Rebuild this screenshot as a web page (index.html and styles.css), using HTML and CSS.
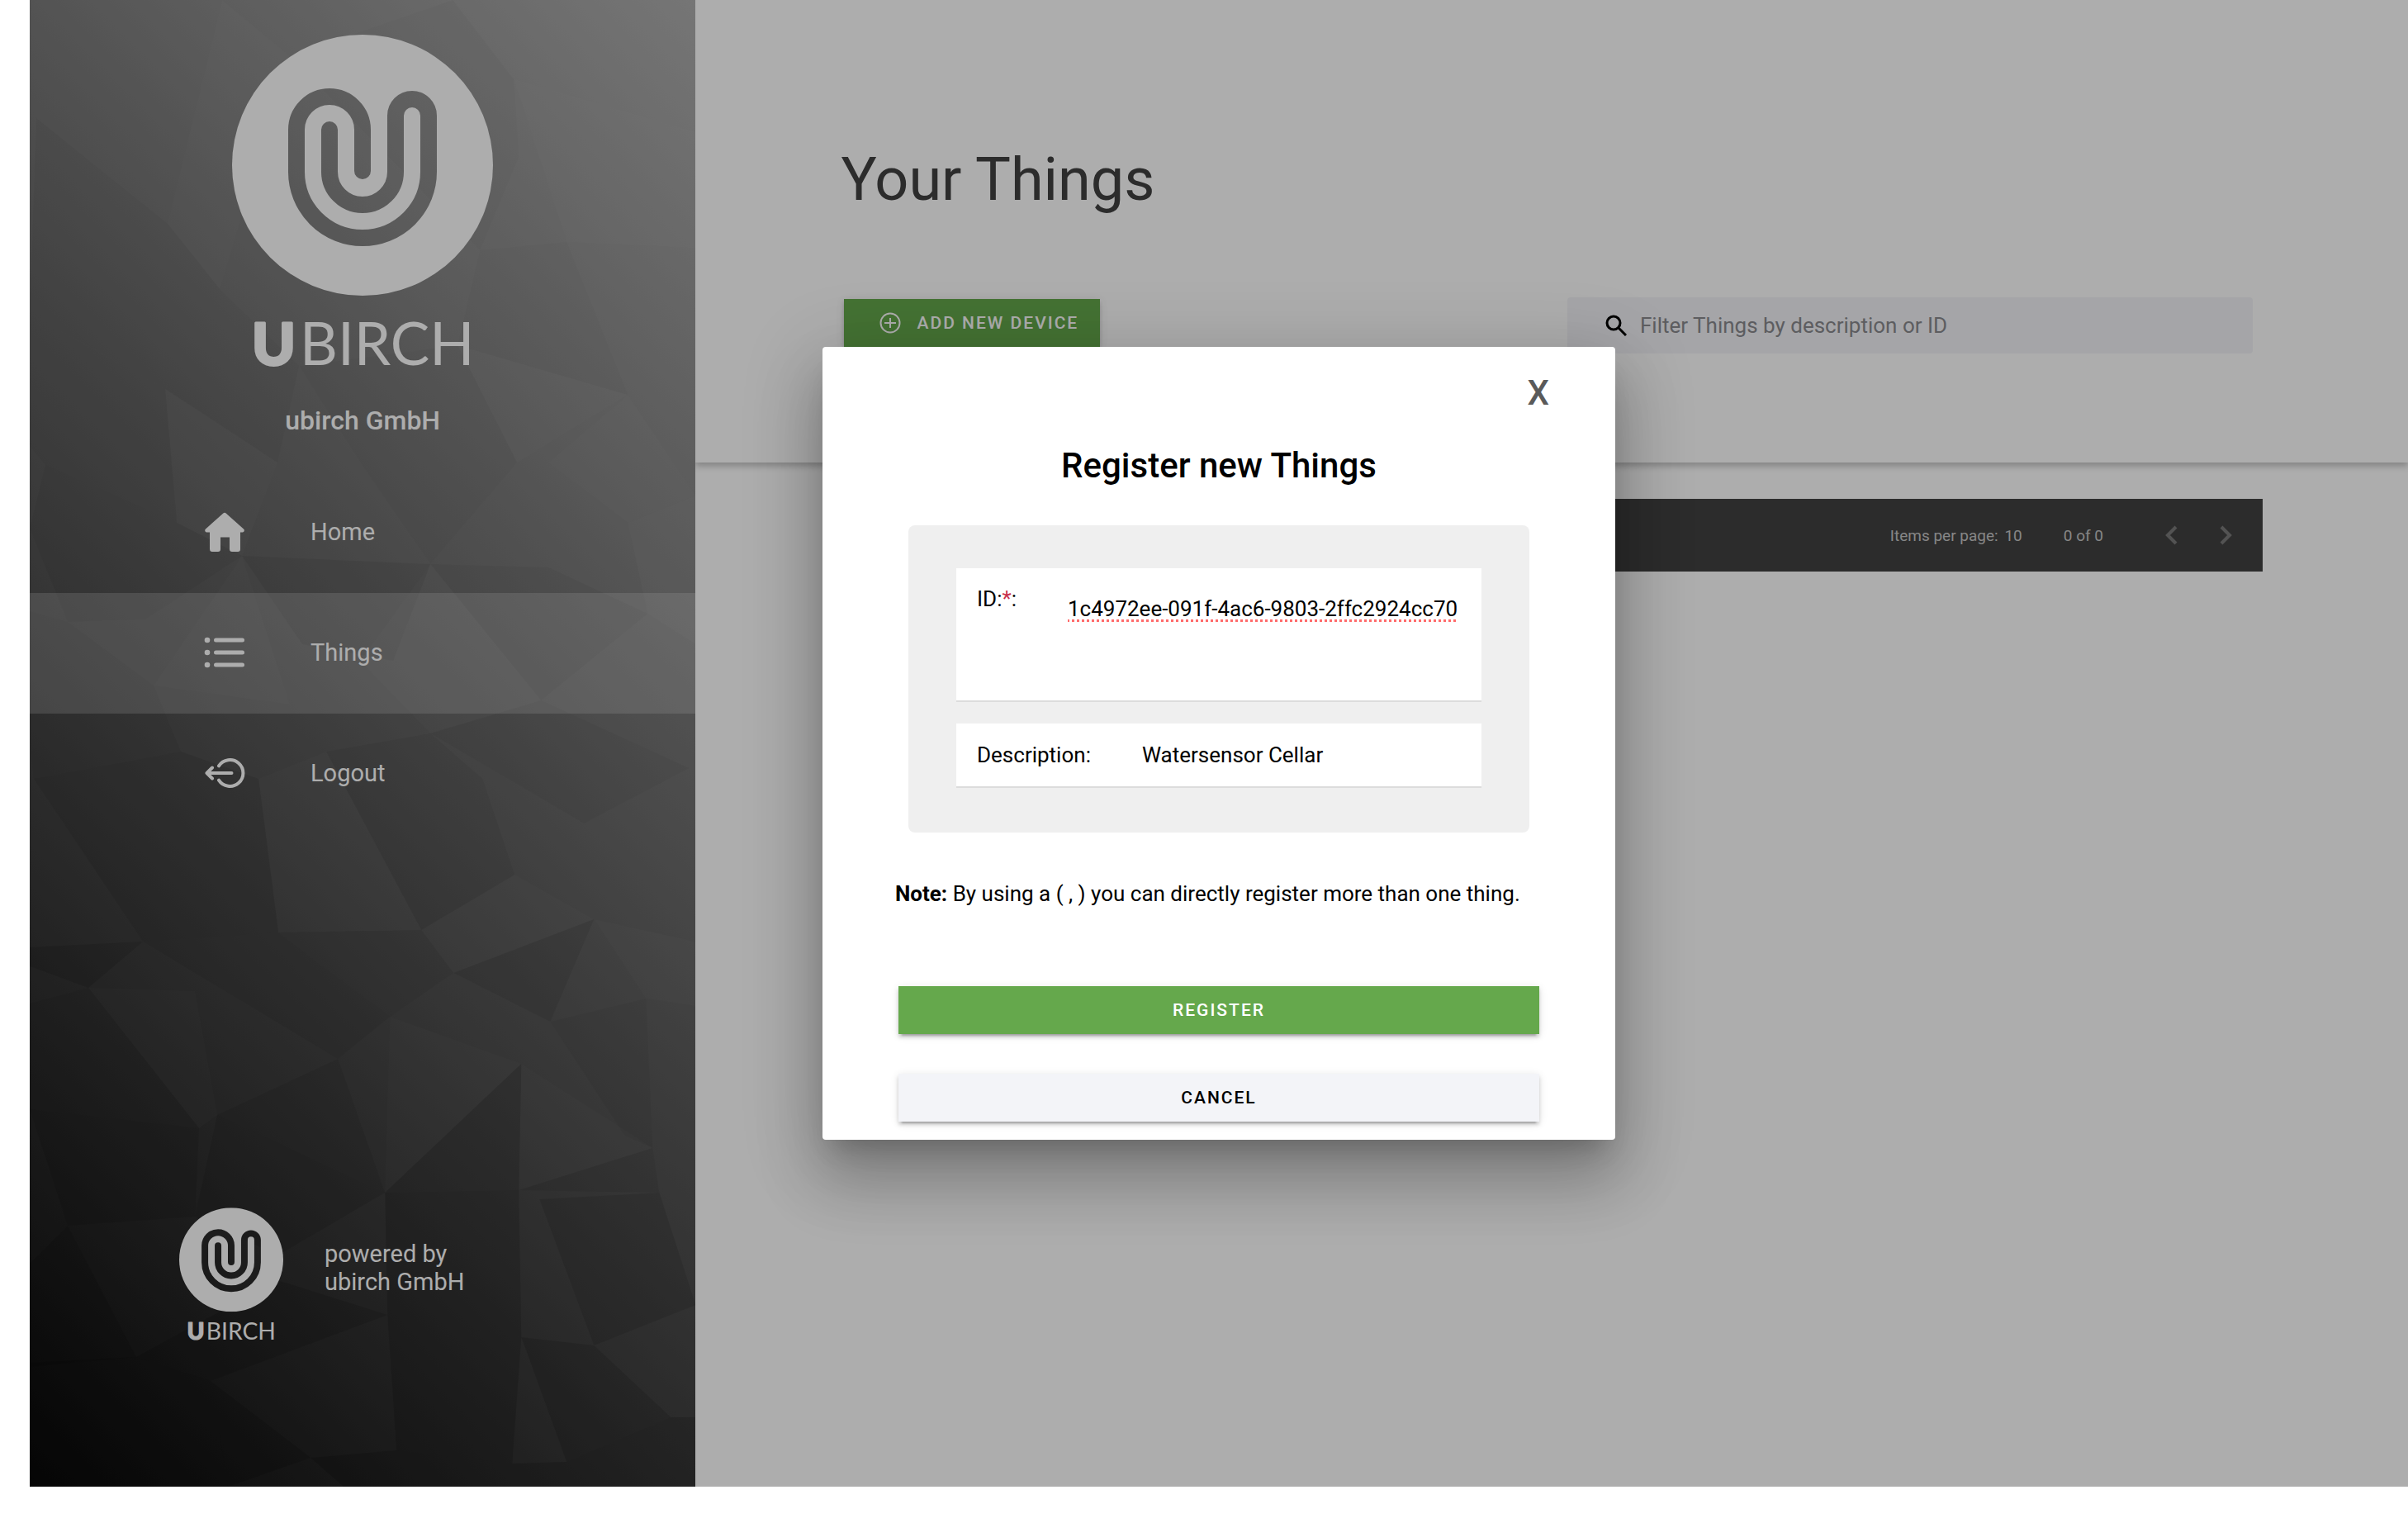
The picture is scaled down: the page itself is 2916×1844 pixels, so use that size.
FILE: index.html
```html
<!DOCTYPE html>
<html lang="en">
<head>
<meta charset="utf-8">
<title>Your Things</title>
<link rel="stylesheet" href="styles.css">
</head>
<body>
<div class="app">
  <aside class="sidebar">
    <svg class="sidebar-art" viewBox="0 0 806 1800" preserveAspectRatio="none" aria-hidden="true">
      <defs>
        <linearGradient id="shade" gradientUnits="userSpaceOnUse" x1="0" y1="1800" x2="1303" y2="497">
          <stop offset="0" stop-color="#0a0a0a"/>
          <stop offset="1" stop-color="#aeaeae"/>
        </linearGradient>
      </defs>
      <rect width="806" height="1800" fill="url(#shade)"/>
      <g fill="#000">
        <path opacity=".03" d="M8 143 167 271 230 350 164 471 0 380Z"/>
        <path opacity=".03" d="M0 380 164 471 178 633 19 563 0 540Z"/>
        <path opacity=".03" d="M230 350 326 443 300 560 164 471Z"/>
        <path opacity=".02" d="M512 0 586 96 592 190 545 303 315 68Z"/>
        <path opacity=".02" d="M545 303 650 293 724 478 518 418Z"/>
        <path opacity=".02" d="M326 443 518 418 590 560 485 683 400 560Z"/>
        <path opacity=".04" d="M19 563 178 633 257 673 140 750 46 753 0 640Z"/>
        <path opacity=".06" d="M257 673 485 683 440 800 330 780Z"/>
        <path opacity=".04" d="M485 683 628 687 748 743 619 848Z"/>
        <path opacity=".03" d="M0 740 46 753 150 830 183 910 5 943 0 900Z"/>
        <path opacity=".07" d="M5 943 183 910 277 943 301 1129 137 1140Z"/>
        <path opacity=".05" d="M359 910 485 888 548 943 587 1059 474 1126Z"/>
        <path opacity=".03" d="M619 848 798 930 671 997 485 888Z"/>
        <path opacity=".1" d="M0 1147 137 1140 71 1196 0 1170Z"/>
        <path opacity=".06" d="M137 1140 301 1129 436 1231 373 1282Z"/>
        <path opacity=".04" d="M301 1129 474 1126 513 1178 436 1231Z"/>
        <path opacity=".07" d="M513 1178 683 1113 630 1237Z"/>
        <path opacity=".05" d="M0 1215 71 1196 205 1366 0 1343Z"/>
        <path opacity=".07" d="M227 1350 373 1282 430 1444Z"/>
        <path opacity=".1" d="M595 1288 592 1441 430 1444Z"/>
        <path opacity=".09" d="M0 1343 205 1366 200 1473 46 1484Z"/>
        <path opacity=".09" d="M227 1350 430 1444 300 1520 200 1473Z"/>
        <path opacity=".14" d="M430 1444 592 1441 595 1619 433 1592Z"/>
        <path opacity=".1" d="M617 1452 762 1444 806 1580 683 1629Z"/>
        <path opacity=".1" d="M46 1484 129 1643 0 1655 0 1530Z"/>
        <path opacity=".14" d="M129 1643 219 1672 240 1800 0 1800 0 1650Z"/>
        <path opacity=".14" d="M219 1672 340 1765 240 1800Z"/>
        <path opacity=".12" d="M300 1550 433 1592 219 1672 129 1643Z"/>
        <path opacity=".14" d="M433 1592 595 1619 584 1772 444 1756Z"/>
        <path opacity=".12" d="M595 1619 683 1629 776 1716 650 1770Z"/>
        <path opacity=".15" d="M340 1765 444 1756 584 1772 650 1770 776 1716 806 1716 806 1800 380 1800Z"/>
        <path opacity=".04" d="M630 1237 746 1209 754 1390 720 1375Z"/>
        <path opacity=".06" d="M592 1441 754 1390 762 1444Z"/>
      </g>
      <g fill="#fff">
        <path opacity=".02" d="M233 0 315 68 230 350 167 271Z"/>
        <path opacity=".02" d="M586 96 806 160 806 300 650 293Z"/>
        <path opacity=".02" d="M518 418 724 478 590 560Z"/>
        <path opacity=".02" d="M724 478 806 600 724 633 628 560Z"/>
        <path opacity=".02" d="M178 633 164 471 300 560 257 673Z"/>
        <path opacity=".03" d="M724 633 806 600 806 780 748 743Z"/>
        <path opacity=".02" d="M150 830 257 673 315 853Z"/>
        <path opacity=".02" d="M485 683 619 848 485 888 400 800Z"/>
        <path opacity=".02" d="M277 943 359 910 474 1126 301 1129Z"/>
        <path opacity=".02" d="M587 1059 683 1113 513 1178 474 1126Z"/>
        <path opacity=".02" d="M683 1113 806 1140 806 1218 746 1209Z"/>
        <path opacity=".02" d="M436 1231 595 1288 430 1444Z"/>
        <path opacity=".02" d="M71 1196 200 1200 227 1350 205 1366Z"/>
        <path opacity=".02" d="M595 1288 754 1390 592 1441Z"/>
      </g>
    </svg>

    <svg class="brand" viewBox="0 0 316 420" role="img" aria-label="ubirch">
      <defs>
        <mask id="loop">
          <rect width="316" height="316" fill="#fff"/>
          <path d="M158 165V115A40 40 0 0 0 78 115V166A80 80 0 0 0 238 166V98A20 20 0 0 0 198 98V166A40 40 0 0 1 118 166V115" fill="none" stroke="#000" stroke-width="20" stroke-linecap="round"/>
        </mask>
      </defs>
      <circle cx="158" cy="158" r="158" fill="#fff" mask="url(#loop)"/>
      <text class="wordmark" x="24" y="400"><tspan class="wordmark-u">U</tspan><tspan x="82">BIRCH</tspan></text>
    </svg>
    <p class="tenant">ubirch GmbH</p>

    <nav class="menu">
      <a class="menu-item" href="#home">
        <svg class="menu-icon" viewBox="0 0 48 48" aria-hidden="true"><path fill="currentColor" d="M22 1.700a3 3 0 0 1 4 0L47 20.500c2 2 0 4.500-3 4H43V45a3 3 0 0 1-3 3H33a3 3 0 0 1-3-3V30.500H19V45a3 3 0 0 1-3 3H9a3 3 0 0 1-3-3V24.500H4c-3 .5-5-2-3-4Z"/></svg>
        <span>Home</span>
      </a>
      <a class="menu-item menu-item-active" href="#things">
        <svg class="menu-icon" viewBox="0 0 48 48" aria-hidden="true"><g fill="currentColor"><circle cx="3" cy="9" r="3.300"/><circle cx="3" cy="24" r="3.300"/><circle cx="3" cy="39" r="3.300"/><rect x="11" y="6.500" width="37" height="5" rx="2.500"/><rect x="11" y="21.500" width="37" height="5" rx="2.500"/><rect x="11" y="36.500" width="37" height="5" rx="2.500"/></g></svg>
        <span>Things</span>
      </a>
      <a class="menu-item" href="#logout">
        <svg class="menu-icon" viewBox="0 0 48 48" aria-hidden="true"><path fill="none" stroke="currentColor" stroke-width="4" stroke-linecap="round" stroke-linejoin="round" d="M17 15.300A16 16 0 1 1 17 32.700M32.500 24H3M9 17.500 2.500 24 9 30.500"/></svg>
        <span>Logout</span>
      </a>
    </nav>

    <div class="powered">
      <svg class="powered-logo" viewBox="0 0 316 420" aria-hidden="true">
        <circle cx="158" cy="158" r="158" fill="#fff" mask="url(#loop)"/>
        <text class="wordmark" x="24" y="400"><tspan class="wordmark-u">U</tspan><tspan x="82">BIRCH</tspan></text>
      </svg>
      <p class="powered-text">powered by<br>ubirch GmbH</p>
    </div>
  </aside>

  <main class="content">
    <header class="page-head">
      <h1 class="page-title">Your Things</h1>
      <div class="toolbar">
        <button class="btn btn-primary btn-add" type="button">
          <svg class="add-icon" viewBox="0 0 26 26" aria-hidden="true"><path fill="none" stroke="currentColor" stroke-width="2" d="M13 1.500a11.500 11.500 0 1 0 0 23a11.500 11.500 0 0 0 0-23ZM13 7V19M6 13H20"/></svg>
          Add new device
        </button>
        <label class="search">
          <svg class="search-icon" viewBox="0 0 26 26" aria-hidden="true"><path fill="none" stroke="#000" stroke-width="3" d="M10 2a8 8 0 1 0 0 16a8 8 0 0 0 0-16ZM16 16 25 25"/></svg>
          <input class="search-input" type="text" placeholder="Filter Things by description or ID" aria-label="Filter Things by description or ID">
        </label>
      </div>
    </header>
    <div class="paginator">
      <span class="page-size">Items per page: <span class="page-count">10</span></span>
      <span class="page-range">0 of 0</span>
      <button class="page-btn" type="button" aria-label="Previous page"><svg class="page-icon" viewBox="0 0 24 24" aria-hidden="true"><path fill="none" stroke="currentColor" stroke-width="4" d="M17 2 7 12 17 22"/></svg></button>
      <button class="page-btn" type="button" aria-label="Next page"><svg class="page-icon" viewBox="0 0 24 24" aria-hidden="true"><path fill="none" stroke="currentColor" stroke-width="4" d="M7 2 17 12 7 22"/></svg></button>
    </div>
  </main>

  <div class="overlay">
    <form class="dialog" role="dialog" aria-labelledby="dialog-title">
      <button class="close" type="button" aria-label="Close">X</button>
      <h2 class="dialog-title" id="dialog-title">Register new Things</h2>
      <div class="panel">
        <div class="field field-id">
          <label class="field-label" for="ids">ID:<span class="required">*</span>:</label>
          <textarea class="field-input ids" id="ids" spellcheck="false">1c4972ee-091f-4ac6-9803-2ffc2924cc70</textarea>
        </div>
        <div class="field">
          <label class="field-label" for="description">Description:</label>
          <input class="field-input description" id="description" type="text" value="Watersensor Cellar">
        </div>
      </div>
      <p class="note"><b>Note:</b> By using a ( , ) you can directly register more than one thing.</p>
      <button class="btn btn-primary btn-wide" type="button">Register</button>
      <button class="btn btn-plain btn-wide" type="button">Cancel</button>
    </form>
  </div>
</div>
</body>
</html>
```
FILE: styles.css
```css
* { box-sizing: border-box; }

body {
  margin: 0;
  background: #fff;
  color: #000;
  font-family: Roboto, "Liberation Sans", sans-serif;
  font-size: 26px;
}

h1, h2, p { margin: 0; }

button, input, textarea {
  border: 0;
  padding: 0;
  margin: 0;
  font: inherit;
  color: inherit;
  background: none;
}

.app {
  position: relative;
  display: grid;
  grid-template-columns: 28% 1fr;
  min-height: calc(100vh - 44px);
  margin: 0 0 44px 36px;
}

/* Sidebar */
.sidebar {
  position: relative;
  isolation: isolate;
  display: flex;
  flex-direction: column;
  padding: 42px 0 170px;
  color: #fff;
}

.sidebar-art {
  position: absolute;
  inset: 0;
  z-index: -1;
  width: 100%;
  height: 100%;
}

.brand {
  align-self: center;
  width: 316px;
  height: 420px;
}

.wordmark {
  font-family: Lato, sans-serif;
  font-size: 71px;
  fill: #fff;
}

.wordmark-u {
  font-weight: 900;
  stroke: #fff;
  stroke-width: 3px;
  stroke-linejoin: round;
}

.tenant {
  margin: 28px 0 44px;
  font-size: 32px;
  line-height: 38px;
  font-weight: 500;
  text-align: center;
}

.menu-item {
  display: flex;
  align-items: center;
  gap: 80px;
  height: 146px;
  padding: 0 0 2px 212px;
  font-size: 29px;
  color: inherit;
  text-decoration: none;
}

.menu-item-active { background: rgba(255, 255, 255, .2); }

.menu-icon { width: 48px; height: 48px; overflow: visible; }

.powered {
  display: flex;
  align-items: flex-start;
  gap: 50px;
  margin-top: auto;
  padding-left: 181px;
}

.powered-logo { width: 126px; height: 168px; }

.powered-text {
  padding-top: 39px;
  font-size: 29px;
  line-height: 34px;
}

/* Content */
.content { background: #fff; }

.page-head {
  padding: 176px 176px 132px;
  box-shadow: 0 4px 8px rgba(0, 0, 0, .25);
}

.page-title {
  margin-bottom: 100px;
  font-size: 72px;
  line-height: 84px;
  font-weight: 400;
  color: #424242;
}

.toolbar {
  display: flex;
  align-items: flex-start;
  justify-content: space-between;
  padding: 0 12px 0 4px;
}

.btn {
  display: flex;
  align-items: center;
  justify-content: center;
  height: 58px;
  font-size: 21px;
  font-weight: 500;
  letter-spacing: 2px;
  text-transform: uppercase;
  box-shadow: 0 6px 2px -4px rgba(0, 0, 0, .2), 0 4px 4px rgba(0, 0, 0, .14), 0 2px 10px rgba(0, 0, 0, .12);
}

.btn-primary { background: #65a84c; color: #fff; }
.btn-plain { background: #f3f4f8; color: #000; }

.btn-add {
  width: 310px;
  gap: 20px;
  margin-top: 2px;
  padding-left: 16px;
}

.add-icon { width: 26px; height: 26px; }

.search {
  display: flex;
  align-items: center;
  gap: 16px;
  flex: 0 1 830px;
  height: 68px;
  padding: 0 46px;
  border-radius: 4px;
  background: #f3f4f8;
}

.search-icon { width: 26px; height: 26px; }

.search-input { flex: 1; height: 32px; outline: 0; }
.search-input::placeholder { color: #8a8a8e; opacity: 1; }

.paginator {
  display: flex;
  align-items: center;
  justify-content: flex-end;
  height: 88px;
  margin: 44px 176px 0;
  padding-right: 13px;
  background: #424242;
  color: #c6c6c6;
  font-size: 19px;
}

.page-count { margin-left: 3px; }
.page-range { margin: 0 50px; }

.page-btn {
  display: grid;
  place-items: center;
  width: 65px;
  height: 64px;
  color: #7b7b7b;
}

.page-icon { width: 24px; height: 24px; }

/* Dialog */
.overlay {
  position: absolute;
  inset: 0;
  display: grid;
  place-items: center;
  background: rgba(0, 0, 0, .32);
}

.dialog {
  display: flex;
  flex-direction: column;
  width: 960px;
  padding: 31px 0 22px;
  border-radius: 4px;
  background: #fff;
  box-shadow: 0 22px 30px -14px rgba(0, 0, 0, .2), 0 48px 76px 6px rgba(0, 0, 0, .2), 0 18px 92px 16px rgba(0, 0, 0, .12);
}

.close {
  align-self: flex-end;
  height: 50px;
  margin-right: 80px;
  font-size: 42px;
  line-height: 50px;
  font-weight: 500;
  color: #5a5a5a;
}

.dialog-title {
  margin: 38px 0 47px;
  font-size: 42px;
  line-height: 50px;
  font-weight: 500;
  text-align: center;
}

.panel {
  display: flex;
  flex-direction: column;
  gap: 28px;
  margin: 0 104px;
  padding: 52px 58px 56px;
  border-radius: 8px;
  background: #efefef;
}

.field {
  display: flex;
  align-items: center;
  height: 76px;
  padding: 0 8px 0 25px;
  background: #fff;
  box-shadow: 0 2px 0 rgba(0, 0, 0, .08);
}

.field-id {
  align-items: flex-start;
  height: 160px;
  padding-top: 21px;
}

.field-label { flex: none; line-height: 32px; }
.required { color: #c8304c; }

.field-input {
  flex: 1;
  min-width: 0;
  margin-left: 62px;
  line-height: 32px;
  outline: 0;
}

.ids {
  height: 120px;
  padding-top: 12px;
  overflow: hidden;
  resize: none;
  text-decoration: underline dotted #ff6b6b 3px;
  text-underline-offset: 4px;
  text-decoration-skip-ink: none;
}

.note {
  margin: 58px 0 96px 88px;
  line-height: 32px;
}

.btn-wide { margin: 0 92px; }
.btn-wide + .btn-wide { margin-top: 48px; }
```
